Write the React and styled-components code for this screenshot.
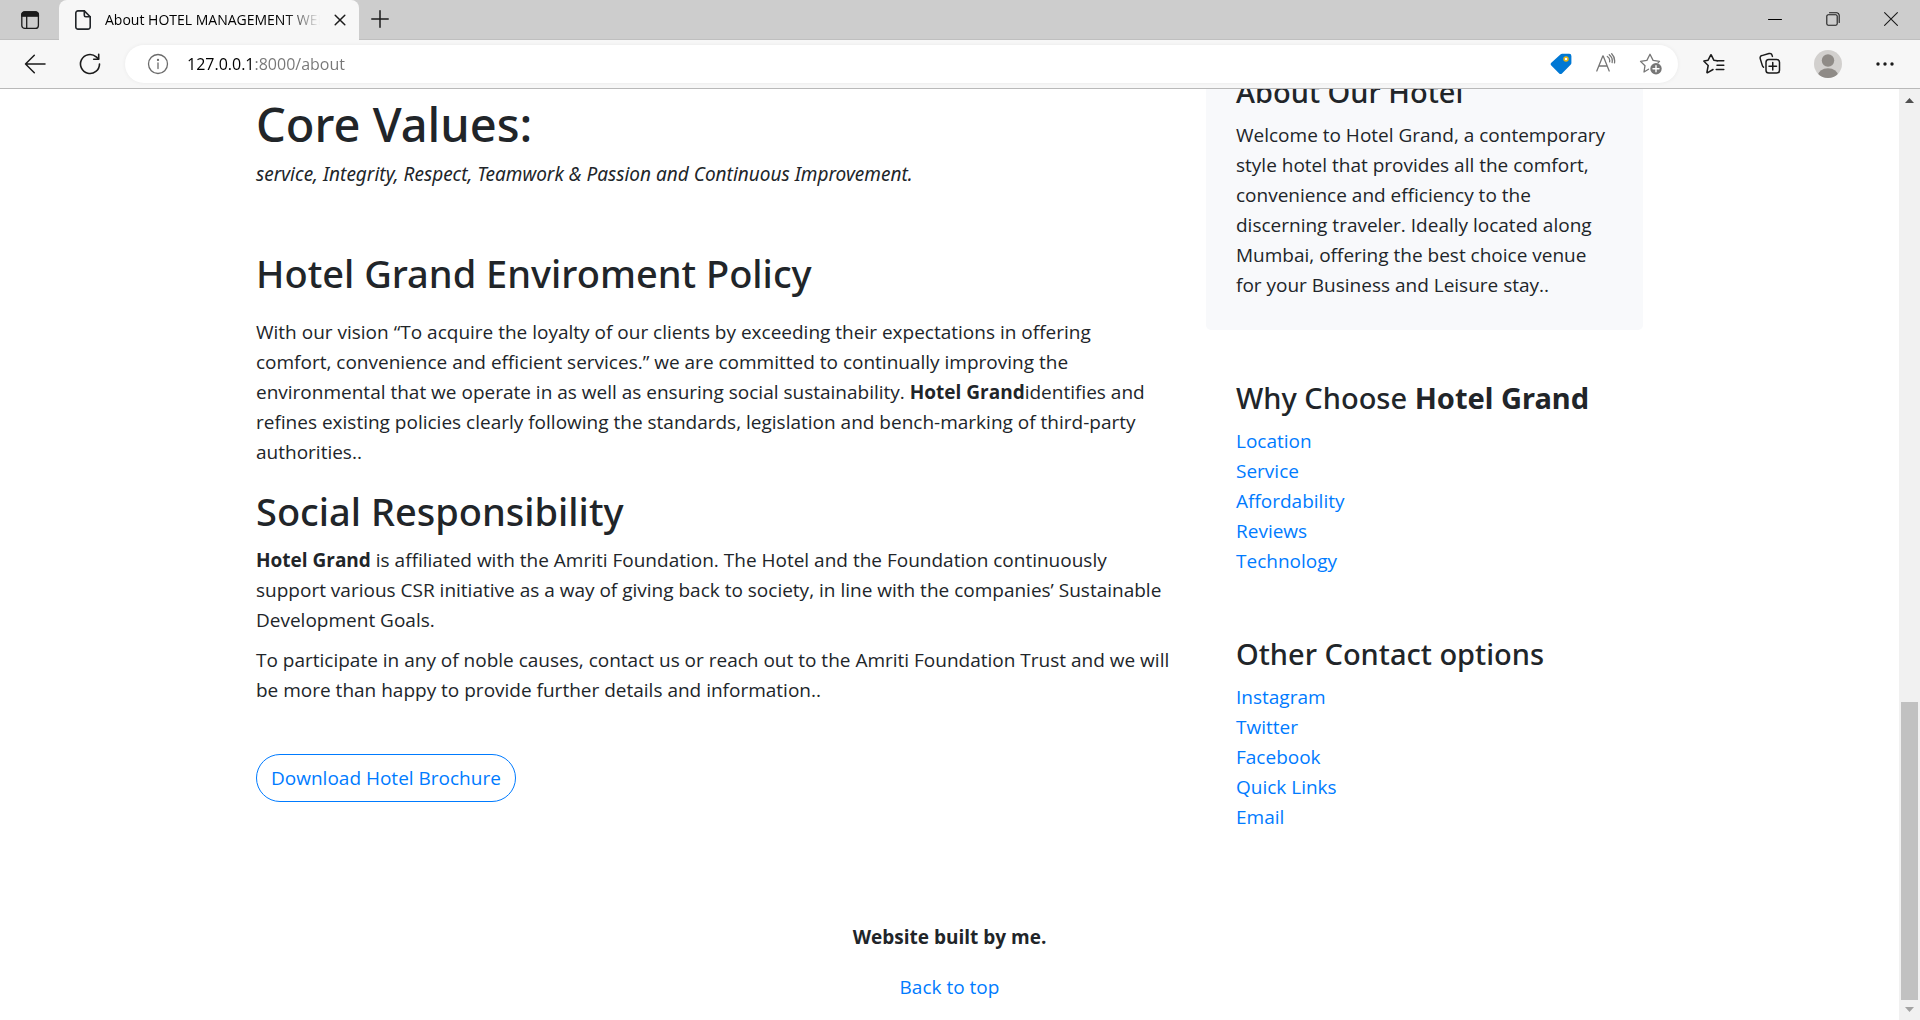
import React from "react";
import styled, { createGlobalStyle } from "styled-components";

const GlobalStyle = createGlobalStyle`
  *, *::before, *::after { box-sizing: border-box; }
  body {
    margin: 0;
    background: #fff;
    color: #212529;
    font: 400 19px/30px "Open Sans", "Noto Sans", sans-serif;
  }
  button, input { font: inherit; color: inherit; }
  em { font-family: "Noto Sans", sans-serif; }
`;

const Window = styled.div`
  display: flex;
  flex-direction: column;
  height: 100vh;
  overflow: hidden;
`;

const TabStrip = styled.div`
  display: flex;
  height: 40px;
  background: #cdcdcd;
  box-shadow: inset 0 -1px 0 #bfbfbf;
`;

const IconButton = styled.button`
  display: flex;
  align-items: center;
  justify-content: center;
  flex: none;
  width: ${(p) => p.$width || 40}px;
  height: ${(p) => p.$height || 37}px;
  padding: 0;
  border: 0;
  background: none;
  color: ${(p) => p.$color || "#1b1b1b"};
`;

const Tab = styled.div`
  display: flex;
  align-items: center;
  gap: 12px;
  width: 300px;
  padding: 0 11px 0 14px;
  border-radius: 8px 8px 0 0;
  background: #f7f7f7;
`;

const TabTitle = styled.span`
  flex: 1;
  overflow: hidden;
  white-space: nowrap;
  color: #000;
  font-size: 14px;
  line-height: 20px;
  mask-image: linear-gradient(to right, #000 84%, transparent);
`;

const WindowControls = styled.div`
  display: flex;
  margin-left: auto;
`;

const Toolbar = styled.div`
  display: flex;
  align-items: center;
  gap: 15px;
  height: 49px;
  padding: 0 14px 0 15px;
  border-bottom: 1px solid #b9b9b9;
  background: #f7f7f7;
`;

const AddressBar = styled.div`
  display: flex;
  align-items: center;
  gap: 9px;
  flex: 1;
  height: 38px;
  padding: 0 9px 0 13px;
  border-radius: 19px;
  background: #fff;
  box-shadow: 0 0 4px rgba(0, 0, 0, 0.06);
`;

const AddressInput = styled.input`
  flex: 1;
  min-width: 0;
  height: 24px;
  padding: 0;
  border: 0;
  outline: 0;
  color: #000;
  font-size: 16px;
  line-height: 24px;
  background: linear-gradient(to right, #000 67px, #767676 67px);
  background-clip: text;
  -webkit-text-fill-color: transparent;
`;

const Viewport = styled.div`
  display: flex;
  flex: 1;
  min-height: 0;
`;

const Page = styled.div`
  flex: 1;
  overflow: hidden;
`;

const Columns = styled.main`
  display: grid;
  grid-template-columns: 2fr 1fr;
  max-width: 1425px;
  margin: 0 auto;
`;

const Article = styled.article`
  padding: 5px 10px 0 19px;
`;

const Sidebar = styled.aside`
  margin-top: -45px;
  padding: 0 19px;
`;

const Title = styled.h1`
  margin: 0 0 5px;
  font: 500 47px/60px "Noto Sans", sans-serif;
`;

const Heading = styled.h2`
  margin: 0 0 ${(p) => (p.$spaced ? 20 : 10)}px;
  font: 500 38px/48px "Noto Sans", sans-serif;
`;

const SideHeading = styled.h4`
  margin: 0 0 10px;
  font: 500 29px/36px "Noto Sans", sans-serif;
`;

const Text = styled.p`
  margin: 0 0 ${(p) => p.$gap || 0}px;
`;

const Card = styled.section`
  margin-bottom: 20px;
  padding: 30px;
  border-radius: 5px;
  background: #f8f9fb;
`;

const SideSection = styled.section`
  padding: 30px;
`;

const LinkList = styled.ol`
  margin: 0;
  padding: 0;
  list-style: none;
`;

const Link = styled.a`
  color: #007bff;
  text-decoration: none;
`;

const OutlineButton = styled.button`
  height: 48px;
  padding: 0 14px;
  border: 1px solid #007bff;
  border-radius: 24px;
  background: none;
  color: #007bff;
`;

const Footer = styled.footer`
  padding: 60px 0 18px;
  text-align: center;
`;

const ScrollBar = styled.div`
  display: flex;
  flex-direction: column;
  width: 21px;
  padding: 0 2px;
  background: #f1f1f1;
`;

const ScrollArrow = styled.svg`
  flex: none;
  width: 17px;
  height: 20px;
  fill: ${(p) => p.$fill};
`;

const ScrollSpace = styled.div`
  flex: 593;
`;

const ScrollThumb = styled.div`
  flex: 298;
  background: #c1c1c1;
`;

const Svg = ({ size = 20, sw = 1.3, children }) => (
  <svg width={size} height={size} viewBox={`0 0 ${size} ${size}`} fill="none" stroke="currentColor" strokeWidth={sw} strokeLinecap="round" strokeLinejoin="round" aria-hidden="true">
    {children}
  </svg>
);

const WorkspaceIcon = () => (
  <Svg>
    <rect x="1.8" y="1.8" width="16.6" height="16.6" rx="3" />
    <path d="M1.8 6.2V4.8a3 3 0 0 1 3-3h10.600a3 3 0 0 1 3 3v1.400z" fill="currentColor" />
    <path d="M6.700 6v12" />
  </Svg>
);
const PageIcon = () => (
  <Svg sw={1.6}>
    <path d="M11.300 .9H5a2.200 2.200 0 0 0-2.200 2.200v13.800A2.200 2.200 0 0 0 5 19.100h10a2.200 2.200 0 0 0 2.200-2.200V6.800z" />
    <path d="M11.300 .9v4.400a1.500 1.500 0 0 0 1.500 1.500h4.400" />
  </Svg>
);
const CloseTabIcon = () => (
  <Svg size={12} sw={1.500}><path d="M1.200 1.200l9.600 9.600M10.800 1.200l-9.600 9.600" /></Svg>
);
const PlusIcon = () => (
  <Svg size={18} sw={1.500}><path d="M9 .8v16.400M.8 9h16.400" /></Svg>
);
const MinimizeIcon = () => (
  <Svg size={14} sw={1}><path d="M.5 7.500h13" stroke="#000" /></Svg>
);
const RestoreIcon = () => (
  <Svg size={14} sw={1.100}>
    <rect x=".8" y="2.800" width="10.400" height="10.400" rx="1.500" />
    <path d="M3.500 .8h7.200a2.500 2.500 0 0 1 2.500 2.500v7.200" />
  </Svg>
);
const CloseIcon = () => (
  <Svg size={14} sw={1.100}><path d="M.6 .6l12.800 12.800M13.400 .6L.6 13.400" /></Svg>
);
const BackIcon = () => (
  <Svg size={22} sw={1.500}><path d="M21 11H1.500M10.300 2.200L1.500 11l8.800 8.800" /></Svg>
);
const RefreshIcon = () => (
  <Svg size={22} sw={1.600}>
    <path d="M20.500 11a9.500 9.500 0 1 1-3.300-7.200l2.200 2.100" />
    <path d="M19.700 1.300v5h-5" />
  </Svg>
);
const InfoIcon = () => (
  <Svg size={22} sw={1.300}>
    <circle cx="11" cy="11" r="9.500" />
    <path d="M11 10v5.500" />
    <circle cx="11" cy="6.900" r=".5" fill="currentColor" />
  </Svg>
);
const TagIcon = () => (
  <Svg size={22} sw={0}>
    <path d="M12.200 .8h7A2.200 2.200 0 0 1 21.400 3v7a2.500 2.500 0 0 1-.8 1.800l-8.600 8.600a2 2 0 0 1-2.800 0L1.300 12.500a2 2 0 0 1 0-2.800l9.100-8.200a2.600 2.600 0 0 1 1.800-.7z" fill="#0078d4" />
    <circle cx="16" cy="6" r="2" fill="#fff" stroke="#e8b510" strokeWidth="1.500" />
  </Svg>
);
const ReadAloudIcon = () => (
  <Svg size={22} sw={1.300}>
    <path d="M1.800 18L7.800 3h.4l6 15M3.800 13h8.400" />
    <path d="M12.300 3.500a5 5 0 0 1 2.300 5.300M14.300 1.700a8 8 0 0 1 2.800 7.800M16.700 .8a10.500 10.500 0 0 1 2.800 9" />
  </Svg>
);
const AddFavoriteIcon = () => (
  <Svg size={24} sw={1.300}>
    <path d="M9.500 17.200L5 20l1-6.300L1.500 9.400l6.400-1L11 2.300l3.100 6.100 6.400 1-1.500 1.500" />
    <circle cx="17" cy="16.800" r="5.700" fill="currentColor" stroke="none" />
    <path d="M17 13.800v6M14 16.800h6" stroke="#fff" strokeWidth="1.400" />
  </Svg>
);
const FavoritesIcon = () => (
  <Svg size={22} sw={1.500}>
    <path d="M14.200 7.800L10.800 7.200 8.200 1.800h-.4L5.100 7.200.9 7.900v.4L5.200 12.500l-1.300 7 .4.300 5.700-3.300" />
    <path d="M14.200 7.800h6.600M14 12.200h6.800M13.200 16.600h7.600" />
  </Svg>
);
const CollectionsIcon = () => (
  <Svg size={24} sw={1.500}>
    <rect x="7" y="7.500" width="13.500" height="13.500" rx="2.800" />
    <path d="M13.750 10.500v7.500M10 14.250h7.500" />
    <path d="M4.500 15.200A3 3 0 0 1 3.300 13.400L1.200 6.600a2.400 2.400 0 0 1 1.700-3L10 1.500a2.400 2.400 0 0 1 3 1.600l.4 1.300" />
  </Svg>
);
const AvatarIcon = () => (
  <Svg size={28} sw={0}>
    <clipPath id="avatar"><circle cx="14" cy="14" r="14" /></clipPath>
    <g clipPath="url(#avatar)">
      <rect width="28" height="28" fill="#d2d0ce" />
      <circle cx="14" cy="10.500" r="6.200" fill="#8f8b87" />
      <ellipse cx="14" cy="26" rx="10.200" ry="7.800" fill="#8f8b87" />
    </g>
  </Svg>
);
const MoreIcon = () => (
  <Svg size={18} sw={0}>
    {[2, 9, 16].map((x) => <circle key={x} cx={x} cy="9" r="1.700" fill="currentColor" />)}
  </Svg>
);

const reasons = ["Location", "Service", "Affordability", "Reviews", "Technology"];
const contacts = ["Instagram", "Twitter", "Facebook", "Quick Links", "Email"];

const Links = ({ items }) => (
  <LinkList>
    {items.map((item) => (
      <li key={item}><Link href="#">{item}</Link></li>
    ))}
  </LinkList>
);

export default function App() {
  return (
    <Window>
      <GlobalStyle />
      <TabStrip>
        <IconButton $width={59} $height={40} aria-label="Tab actions"><WorkspaceIcon /></IconButton>
        <Tab>
          <PageIcon />
          <TabTitle>About HOTEL MANAGEMENT WEBSITE</TabTitle>
          <IconButton $width={16} aria-label="Close tab"><CloseTabIcon /></IconButton>
        </Tab>
        <IconButton $width={42} $height={38} aria-label="New tab"><PlusIcon /></IconButton>
        <WindowControls>
          <IconButton $width={58} $height={38} aria-label="Minimize"><MinimizeIcon /></IconButton>
          <IconButton $width={58} $height={38} aria-label="Restore"><RestoreIcon /></IconButton>
          <IconButton $width={58} $height={38} aria-label="Close"><CloseIcon /></IconButton>
        </WindowControls>
      </TabStrip>
      <Toolbar>
        <IconButton aria-label="Back"><BackIcon /></IconButton>
        <IconButton aria-label="Refresh"><RefreshIcon /></IconButton>
        <AddressBar>
          <IconButton $color="#6b6b6b" aria-label="Site information"><InfoIcon /></IconButton>
          <AddressInput aria-label="Address" defaultValue="127.0.0.1:8000/about" />
          <IconButton $width={36} aria-label="Shopping"><TagIcon /></IconButton>
          <IconButton $width={36} $color="#767676" aria-label="Read aloud"><ReadAloudIcon /></IconButton>
          <IconButton $width={36} $color="#767676" aria-label="Add to favorites"><AddFavoriteIcon /></IconButton>
        </AddressBar>
        <IconButton $width={42} aria-label="Favorites"><FavoritesIcon /></IconButton>
        <IconButton $width={42} aria-label="Collections"><CollectionsIcon /></IconButton>
        <IconButton $width={42} aria-label="Profile"><AvatarIcon /></IconButton>
        <IconButton $width={42} aria-label="More"><MoreIcon /></IconButton>
      </Toolbar>
      <Viewport>
        <Page>
          <Columns>
            <Article>
              <Title>Core Values:</Title>
              <Text $gap={60}>
                <em>service, Integrity, Respect, Teamwork &amp; Passion and Continuous Improvement.</em>
              </Text>
              <Heading $spaced>Hotel Grand Enviroment Policy</Heading>
              <Text $gap={20}>
                With our vision “To acquire the loyalty of our clients by exceeding their expectations in offering
                <br />
                comfort, convenience and efficient services.” we are committed to continually improving the
                environmental that we operate in as well as ensuring social sustainability.{" "}
                <strong>Hotel Grand</strong>identifies and refines existing policies clearly following the standards,
                legislation and bench-marking of third-party authorities..
              </Text>
              <Heading>Social Responsibility</Heading>
              <Text $gap={10}>
                <strong>Hotel Grand</strong> is affiliated with the Amriti Foundation. The Hotel and the Foundation
                continuously support various CSR initiative as a way of giving back to society, in line with the
                companies’ Sustainable Development Goals.
              </Text>
              <Text $gap={49}>
                To participate in any of noble causes, contact us or reach out to the Amriti Foundation Trust and we
                will be more than happy to provide further details and information..
              </Text>
              <OutlineButton>Download Hotel Brochure</OutlineButton>
            </Article>
            <Sidebar>
              <Card>
                <SideHeading>About Our Hotel</SideHeading>
                <Text>
                  Welcome to Hotel Grand, a contemporary style hotel that provides all the comfort, convenience and
                  efficiency to the discerning traveler. Ideally located along Mumbai, offering the best choice venue
                  for your Business and Leisure stay..
                </Text>
              </Card>
              <SideSection>
                <SideHeading>Why Choose <strong>Hotel Grand</strong></SideHeading>
                <Links items={reasons} />
              </SideSection>
              <SideSection>
                <SideHeading>Other Contact options</SideHeading>
                <Links items={contacts} />
              </SideSection>
            </Sidebar>
          </Columns>
          <Footer>
            <Text $gap={20}><strong>Website built by me.</strong></Text>
            <Text><Link href="#">Back to top</Link></Text>
          </Footer>
        </Page>
        <ScrollBar aria-hidden="true">
          <ScrollArrow $fill="#505050" viewBox="0 0 17 20"><path d="M4 14l4.500-5 4.500 5z" /></ScrollArrow>
          <ScrollSpace />
          <ScrollThumb />
          <ScrollArrow $fill="#a3a3a3" viewBox="0 0 17 20"><path d="M4 7l4.500 5L13 7z" /></ScrollArrow>
        </ScrollBar>
      </Viewport>
    </Window>
  );
}
